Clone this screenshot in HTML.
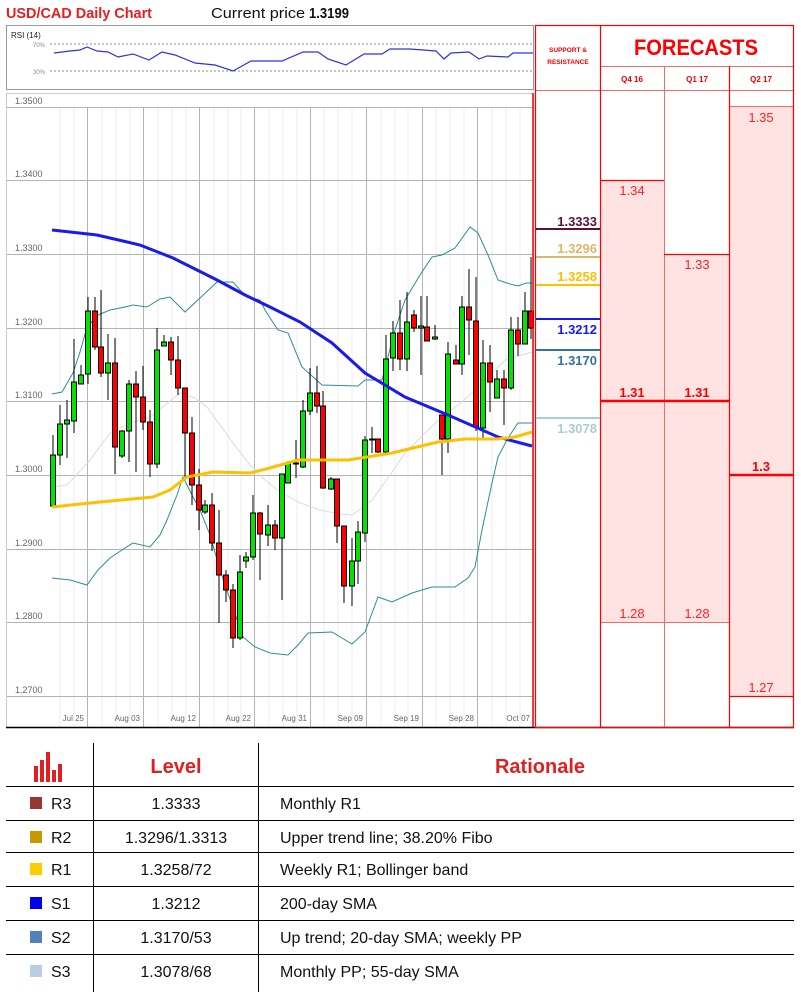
<!DOCTYPE html>
<html><head><meta charset="utf-8"><style>
html,body{margin:0;padding:0;background:#fff;width:801px;height:999px;overflow:hidden}
svg{display:block}
text{font-family:"Liberation Sans",sans-serif}
</style></head><body>
<svg width="801" height="999" viewBox="0 0 801 999" xmlns="http://www.w3.org/2000/svg">
<!-- title -->
<text x="6" y="18" font-size="15" font-weight="bold" fill="#e61e1e" textLength="146" lengthAdjust="spacingAndGlyphs">USD/CAD Daily Chart</text>
<text x="211" y="18" font-size="15" fill="#111" textLength="94" lengthAdjust="spacingAndGlyphs">Current price</text>
<text x="309" y="18" font-size="15" font-weight="bold" fill="#111" textLength="40" lengthAdjust="spacingAndGlyphs">1.3199</text>

<!-- RSI panel -->
<rect x="6.5" y="25.5" width="527" height="64" fill="#fff" stroke="#999"/>
<text x="11" y="38" font-size="8" fill="#222">RSI (14)</text>
<text x="33" y="47" font-size="6" fill="#888">70%</text>
<text x="33" y="74" font-size="6" fill="#888">30%</text>
<line x1="50" y1="44" x2="533" y2="44" stroke="#666" stroke-dasharray="2,2" stroke-width="0.8"/>
<line x1="50" y1="71" x2="533" y2="71" stroke="#666" stroke-dasharray="2,2" stroke-width="0.8"/>
<polyline fill="none" stroke="#3030e0" stroke-width="1.2" points="54,53 70,51 80,50 87,47 97,51 108,52 118,57 133,54 149,60 162,52 175,55 195,63 215,65 233,71 251,61 282,61 303,52 318,52 328,59 346,65 364,54 382,54 390,49 410,49 436,51 444,59 451,53 469,52 479,59 487,56 508,57 513,53 533,53"/>

<!-- main chart frame -->
<rect x="6.5" y="93.5" width="527" height="634" fill="#fff" stroke="#ccc"/>
<!-- minor verticals -->
<g stroke="#ececec" stroke-width="1">
<line x1="60" y1="107" x2="60" y2="727"/><line x1="74" y1="107" x2="74" y2="727"/><line x1="102" y1="107" x2="102" y2="727"/><line x1="116" y1="107" x2="116" y2="727"/><line x1="130" y1="107" x2="130" y2="727"/><line x1="158" y1="107" x2="158" y2="727"/><line x1="172" y1="107" x2="172" y2="727"/><line x1="186" y1="107" x2="186" y2="727"/><line x1="214" y1="107" x2="214" y2="727"/><line x1="228" y1="107" x2="228" y2="727"/><line x1="241" y1="107" x2="241" y2="727"/><line x1="269" y1="107" x2="269" y2="727"/><line x1="283" y1="107" x2="283" y2="727"/><line x1="297" y1="107" x2="297" y2="727"/><line x1="324" y1="107" x2="324" y2="727"/><line x1="338" y1="107" x2="338" y2="727"/><line x1="352" y1="107" x2="352" y2="727"/><line x1="381" y1="107" x2="381" y2="727"/><line x1="395" y1="107" x2="395" y2="727"/><line x1="408" y1="107" x2="408" y2="727"/><line x1="436" y1="107" x2="436" y2="727"/><line x1="450" y1="107" x2="450" y2="727"/><line x1="464" y1="107" x2="464" y2="727"/><line x1="492" y1="107" x2="492" y2="727"/><line x1="506" y1="107" x2="506" y2="727"/><line x1="520" y1="107" x2="520" y2="727"/>
</g>
<g stroke="#b4b4b4" stroke-width="1">
<line x1="87.5" y1="107" x2="87.5" y2="727"/><line x1="143.5" y1="107" x2="143.5" y2="727"/><line x1="199.5" y1="107" x2="199.5" y2="727"/><line x1="254.5" y1="107" x2="254.5" y2="727"/><line x1="310.5" y1="107" x2="310.5" y2="727"/><line x1="366.5" y1="107" x2="366.5" y2="727"/><line x1="422.5" y1="107" x2="422.5" y2="727"/><line x1="477.5" y1="107" x2="477.5" y2="727"/>
<line x1="7" y1="107.5" x2="533" y2="107.5"/><line x1="7" y1="180.5" x2="533" y2="180.5"/><line x1="7" y1="254.5" x2="533" y2="254.5"/><line x1="7" y1="328.5" x2="533" y2="328.5"/><line x1="7" y1="401.5" x2="533" y2="401.5"/><line x1="7" y1="475.5" x2="533" y2="475.5"/><line x1="7" y1="549.5" x2="533" y2="549.5"/><line x1="7" y1="622.5" x2="533" y2="622.5"/><line x1="7" y1="696.5" x2="533" y2="696.5"/>
</g>
<g font-size="9" fill="#666">
<text x="15" y="104">1.3500</text><text x="15" y="177">1.3400</text><text x="15" y="251">1.3300</text><text x="15" y="325">1.3200</text><text x="15" y="398">1.3100</text><text x="15" y="472">1.3000</text><text x="15" y="546">1.2900</text><text x="15" y="619">1.2800</text><text x="15" y="693">1.2700</text>
</g>
<g font-size="8" fill="#666" text-anchor="end">
<text x="84" y="721">Jul 25</text><text x="140" y="721">Aug 03</text><text x="196" y="721">Aug 12</text><text x="251" y="721">Aug 22</text><text x="307" y="721">Aug 31</text><text x="363" y="721">Sep 09</text><text x="419" y="721">Sep 19</text><text x="474" y="721">Sep 28</text><text x="530" y="721">Oct 07</text>
</g>

<!-- 20 SMA -->
<polyline fill="none" stroke="#dcdcdc" stroke-width="1" points="52,487 67,485 90,460 110,433 130,423 150,417 165,405 180,393 195,398 207,407 220,425 233,443 250,465 265,480 280,492 298,502 320,510 340,514 352,515 362,508 372,500 390,475 405,453 425,433 442,417 458,405 472,393 490,375 505,360 518,356 532,352"/>
<!-- Bollinger -->
<polyline fill="none" stroke="#2a9090" stroke-width="1" points="52,394 62,392 73,373 80,352 87,327 98,315 110,310 125,307 133,305 147,307 160,299 170,297 185,312 200,298 217,282 233,282 240,290 247,297 260,300 265,310 270,318 278,330 288,333 302,367 322,385 358,386 365,380 382,380 395,330 405,300 420,275 432,257 442,255 455,248 470,227 478,233 488,255 498,280 510,284 518,286 526,283 532,283"/>
<polyline fill="none" stroke="#2a9090" stroke-width="1" points="52,578 70,580 87,585 98,570 110,558 125,548 133,543 150,547 160,535 167,520 177,495 183,477 192,495 200,510 210,535 220,570 232,605 243,637 255,647 270,653 288,655 298,645 308,633 332,632 342,638 352,644 365,632 378,597 392,602 412,593 432,587 455,587 468,578 475,567 482,530 492,483 498,457 508,438 518,423 532,423"/>

<!-- candles -->
<g stroke="#000" stroke-width="1">
<line x1="53" y1="435" x2="53" y2="506"/><rect x="50.5" y="455" width="5" height="51" fill="#00e400"/>
<line x1="60" y1="405" x2="60" y2="465"/><rect x="57.5" y="424" width="5" height="31" fill="#00e400"/>
<line x1="67" y1="400" x2="67" y2="458"/><rect x="64.5" y="420" width="5" height="4" fill="#00e400"/>
<line x1="74" y1="339" x2="74" y2="433"/><rect x="71.5" y="382" width="5" height="39" fill="#00e400"/>
<line x1="81" y1="365" x2="81" y2="384"/><rect x="78.5" y="375" width="5" height="9" fill="#00e400"/>
<line x1="88" y1="297" x2="88" y2="384"/><rect x="85.5" y="311" width="5" height="63" fill="#00e400"/>
<line x1="95" y1="297" x2="95" y2="350"/><rect x="92.5" y="311" width="5" height="36" fill="#f00"/>
<line x1="101" y1="290" x2="101" y2="377"/><rect x="98.5" y="347" width="5" height="26" fill="#f00"/>
<line x1="108" y1="334" x2="108" y2="400"/><rect x="105.5" y="363" width="5" height="10" fill="#00e400"/>
<line x1="115" y1="338" x2="115" y2="474"/><rect x="112.5" y="363" width="5" height="84" fill="#f00"/>
<line x1="122" y1="430" x2="122" y2="458"/><rect x="119.5" y="431" width="5" height="25" fill="#00e400"/>
<line x1="129" y1="380" x2="129" y2="462"/><rect x="126.5" y="384" width="5" height="47" fill="#00e400"/>
<line x1="136" y1="371" x2="136" y2="472"/><rect x="133.5" y="384" width="5" height="13" fill="#f00"/>
<line x1="143" y1="366" x2="143" y2="430"/><rect x="140.5" y="397" width="5" height="25" fill="#f00"/>
<line x1="150" y1="410" x2="150" y2="477"/><rect x="147.5" y="422" width="5" height="42" fill="#f00"/>
<line x1="157" y1="328" x2="157" y2="468"/><rect x="154.5" y="350" width="5" height="114" fill="#00e400"/>
<line x1="164" y1="335" x2="164" y2="346"/><rect x="161.5" y="342" width="5" height="4" fill="#00e400"/>
<line x1="171" y1="337" x2="171" y2="375"/><rect x="168.5" y="342" width="5" height="18" fill="#f00"/>
<line x1="178" y1="336" x2="178" y2="395"/><rect x="175.5" y="360" width="5" height="28" fill="#f00"/>
<line x1="185" y1="388" x2="185" y2="480"/><rect x="182.5" y="388" width="5" height="45" fill="#f00"/>
<line x1="192" y1="417" x2="192" y2="505"/><rect x="189.5" y="433" width="5" height="52" fill="#f00"/>
<line x1="199" y1="469" x2="199" y2="530"/><rect x="196.5" y="485" width="5" height="25" fill="#f00"/>
<line x1="205" y1="500" x2="205" y2="514"/><rect x="202.5" y="505" width="5" height="7" fill="#00e400"/>
<line x1="212" y1="493" x2="212" y2="551"/><rect x="209.5" y="505" width="5" height="38" fill="#f00"/>
<line x1="219" y1="510" x2="219" y2="623"/><rect x="216.5" y="543" width="5" height="32" fill="#f00"/>
<line x1="226" y1="570" x2="226" y2="602"/><rect x="223.5" y="575" width="5" height="15" fill="#f00"/>
<line x1="233" y1="584" x2="233" y2="648"/><rect x="230.5" y="590" width="5" height="48" fill="#f00"/>
<line x1="240" y1="555" x2="240" y2="640"/><rect x="237.5" y="572" width="5" height="66" fill="#00e400"/>
<line x1="246" y1="552" x2="246" y2="568"/><rect x="243.5" y="557" width="5" height="4" fill="#00e400"/>
<line x1="253" y1="495" x2="253" y2="560"/><rect x="250.5" y="513" width="5" height="44" fill="#00e400"/>
<line x1="260" y1="512" x2="260" y2="580"/><rect x="257.5" y="513" width="5" height="21" fill="#f00"/>
<line x1="268" y1="505" x2="268" y2="546"/><rect x="265.5" y="525" width="5" height="10" fill="#00e400"/>
<line x1="275" y1="520" x2="275" y2="550"/><rect x="272.5" y="525" width="5" height="13" fill="#f00"/>
<line x1="282" y1="474" x2="282" y2="600"/><rect x="279.5" y="474" width="5" height="64" fill="#00e400"/>
<line x1="288" y1="461" x2="288" y2="482"/><rect x="285.5" y="463" width="5" height="20" fill="#00e400"/>
<line x1="296" y1="440" x2="296" y2="478"/><rect x="293.5" y="463" width="5" height="1" fill="#f00"/>
<line x1="303" y1="400" x2="303" y2="468"/><rect x="300.5" y="411" width="5" height="56" fill="#00e400"/>
<line x1="310" y1="368" x2="310" y2="415"/><rect x="307.5" y="393" width="5" height="18" fill="#00e400"/>
<line x1="317" y1="366" x2="317" y2="413"/><rect x="314.5" y="393" width="5" height="13" fill="#f00"/>
<line x1="323" y1="391" x2="323" y2="489"/><rect x="320.5" y="406" width="5" height="82" fill="#f00"/>
<line x1="331" y1="477" x2="331" y2="490"/><rect x="328.5" y="479" width="5" height="10" fill="#00e400"/>
<line x1="337" y1="479" x2="337" y2="543"/><rect x="334.5" y="479" width="5" height="47" fill="#f00"/>
<line x1="344" y1="526" x2="344" y2="603"/><rect x="341.5" y="526" width="5" height="60" fill="#f00"/>
<line x1="352" y1="538" x2="352" y2="606"/><rect x="349.5" y="561" width="5" height="25" fill="#00e400"/>
<line x1="358" y1="521" x2="358" y2="584"/><rect x="355.5" y="532" width="5" height="29" fill="#00e400"/>
<line x1="365" y1="436" x2="365" y2="542"/><rect x="362.5" y="440" width="5" height="93" fill="#00e400"/>
<line x1="372" y1="427" x2="372" y2="453"/><rect x="369.5" y="439" width="5" height="1" fill="#00e400"/>
<line x1="378" y1="439" x2="378" y2="453"/><rect x="375.5" y="439" width="5" height="13" fill="#f00"/>
<line x1="386" y1="335" x2="386" y2="454"/><rect x="383.5" y="359" width="5" height="93" fill="#00e400"/>
<line x1="393" y1="321" x2="393" y2="371"/><rect x="390.5" y="333" width="5" height="25" fill="#00e400"/>
<line x1="400" y1="300" x2="400" y2="370"/><rect x="397.5" y="333" width="5" height="26" fill="#f00"/>
<line x1="407" y1="292" x2="407" y2="371"/><rect x="404.5" y="322" width="5" height="37" fill="#00e400"/>
<line x1="414" y1="310" x2="414" y2="332"/><rect x="411.5" y="315" width="5" height="13" fill="#f00"/>
<line x1="421" y1="296" x2="421" y2="375"/><rect x="418.5" y="326" width="5" height="2" fill="#00e400"/>
<line x1="427" y1="296" x2="427" y2="341"/><rect x="424.5" y="327" width="5" height="14" fill="#f00"/>
<line x1="435" y1="325" x2="435" y2="340"/><rect x="432.5" y="337" width="5" height="2" fill="#00e400"/>
<line x1="442" y1="415" x2="442" y2="475"/><rect x="439.5" y="415" width="5" height="24" fill="#f00"/>
<line x1="448" y1="342" x2="448" y2="453"/><rect x="445.5" y="354" width="5" height="85" fill="#00e400"/>
<line x1="456" y1="345" x2="456" y2="364"/><rect x="453.5" y="360" width="5" height="4" fill="#f00"/>
<line x1="462" y1="296" x2="462" y2="375"/><rect x="459.5" y="307" width="5" height="57" fill="#00e400"/>
<line x1="469" y1="269" x2="469" y2="355"/><rect x="466.5" y="307" width="5" height="13" fill="#f00"/>
<line x1="476" y1="277" x2="476" y2="431"/><rect x="473.5" y="321" width="5" height="106" fill="#f00"/>
<line x1="483" y1="340" x2="483" y2="439"/><rect x="480.5" y="363" width="5" height="65" fill="#00e400"/>
<line x1="490" y1="345" x2="490" y2="412"/><rect x="487.5" y="363" width="5" height="19" fill="#f00"/>
<line x1="497" y1="370" x2="497" y2="398"/><rect x="494.5" y="379" width="5" height="19" fill="#00e400"/>
<line x1="504" y1="370" x2="504" y2="425"/><rect x="501.5" y="379" width="5" height="9" fill="#f00"/>
<line x1="511" y1="317" x2="511" y2="390"/><rect x="508.5" y="330" width="5" height="58" fill="#00e400"/>
<line x1="518" y1="317" x2="518" y2="356"/><rect x="515.5" y="330" width="5" height="14" fill="#f00"/>
<line x1="525" y1="292" x2="525" y2="344"/><rect x="522.5" y="311" width="5" height="33" fill="#00e400"/>
<line x1="531" y1="257" x2="531" y2="339"/><rect x="528.5" y="311" width="5" height="17" fill="#f00"/>
</g>

<!-- 200 SMA & 55 SMA -->
<polyline fill="none" stroke="#1a1aee" stroke-width="3" points="52,230 97,235 140,245 173,258 217,280 245,295 270,307 300,322 332,343 365,373 405,397 448,415 498,437 532,446"/>
<polyline fill="none" stroke="#ffc000" stroke-width="3" points="52,507 100,502 153,497 170,490 187,477 213,472 250,473 270,468 298,460 348,460 392,453 438,442 465,439 498,439 515,437 532,432"/>

<line x1="533" y1="93" x2="533" y2="728" stroke="#f00" stroke-width="1.5"/>
<line x1="6" y1="727.5" x2="794" y2="727.5" stroke="#000" stroke-width="1.5"/>

<!-- right panel -->
<rect x="600" y="180" width="64" height="442" fill="#ffe3e3"/>
<rect x="664" y="254" width="65" height="368" fill="#ffe3e3"/>
<rect x="729" y="106" width="64" height="590" fill="#ffe3e3"/>
<g stroke="#ff6666" stroke-width="1">
<line x1="536" y1="90.5" x2="793" y2="90.5"/>
<line x1="664.5" y1="66" x2="664.5" y2="727"/>
<line x1="600" y1="66.5" x2="793" y2="66.5"/>
<line x1="729" y1="106.5" x2="793" y2="106.5"/>
<line x1="600" y1="622.5" x2="729" y2="622.5"/>
</g>
<g stroke="#f00" stroke-width="1.2">
<rect x="535.5" y="25.5" width="258" height="702" fill="none"/>
<line x1="600.5" y1="25" x2="600.5" y2="727"/>
<line x1="729.5" y1="66" x2="729.5" y2="727"/>
<line x1="600" y1="180.5" x2="664" y2="180.5"/>
<line x1="664" y1="254.5" x2="729" y2="254.5"/>
<line x1="729" y1="696.5" x2="793" y2="696.5"/>
</g>
<line x1="600" y1="401" x2="729" y2="401" stroke="#f00" stroke-width="2.5"/>
<line x1="729" y1="475" x2="793" y2="475" stroke="#f00" stroke-width="2.5"/>

<text x="568" y="52" font-size="6.5" font-weight="bold" fill="#e00" text-anchor="middle">SUPPORT &amp;</text>
<text x="568" y="64" font-size="6.5" font-weight="bold" fill="#e00" text-anchor="middle">RESISTANCE</text>
<text x="696" y="55" font-size="22" font-weight="bold" fill="#f00" text-anchor="middle" textLength="124" lengthAdjust="spacingAndGlyphs">FORECASTS</text>
<g font-size="8" font-weight="bold" fill="#e00" text-anchor="middle">
<text x="632" y="82">Q4 16</text><text x="697" y="82">Q1 17</text><text x="761" y="82">Q2 17</text>
</g>
<g font-size="13" fill="#f22" text-anchor="middle">
<text x="632" y="195">1.34</text><text x="697" y="269">1.33</text><text x="761" y="122">1.35</text>
<text x="632" y="618">1.28</text><text x="697" y="618">1.28</text><text x="761" y="692">1.27</text>
</g>
<g font-size="13" font-weight="bold" fill="#f00" text-anchor="middle">
<text x="632" y="397">1.31</text><text x="697" y="397">1.31</text><text x="761" y="471">1.3</text>
</g>

<!-- S&R levels -->
<line x1="536" y1="229" x2="600" y2="229" stroke="#5c1236" stroke-width="2"/>
<line x1="536" y1="257" x2="600" y2="257" stroke="#d9b86a" stroke-width="2"/>
<line x1="536" y1="285" x2="600" y2="285" stroke="#ffc000" stroke-width="2"/>
<line x1="536" y1="319" x2="600" y2="319" stroke="#1a1aee" stroke-width="2"/>
<line x1="536" y1="350" x2="600" y2="350" stroke="#31739c" stroke-width="2"/>
<line x1="536" y1="418" x2="600" y2="418" stroke="#a8cfcf" stroke-width="2"/>
<g font-size="13" font-weight="bold" text-anchor="end">
<text x="597" y="226" fill="#5c1236">1.3333</text>
<text x="597" y="253" fill="#d9b86a">1.3296</text>
<text x="597" y="281" fill="#ffc000">1.3258</text>
<text x="597" y="334" fill="#1a1aee">1.3212</text>
<text x="597" y="365" fill="#31739c">1.3170</text>
<text x="597" y="433" fill="#a8cfcf">1.3078</text>
</g>

<!-- bottom table -->
<g stroke="#000" stroke-width="1">
<line x1="93.5" y1="743" x2="93.5" y2="992"/>
<line x1="258.5" y1="743" x2="258.5" y2="992"/>
<line x1="6" y1="786.5" x2="794" y2="786.5"/>
<line x1="6" y1="820.5" x2="794" y2="820.5"/>
<line x1="6" y1="852.5" x2="794" y2="852.5"/>
<line x1="6" y1="886.5" x2="794" y2="886.5"/>
<line x1="6" y1="920.5" x2="794" y2="920.5"/>
<line x1="6" y1="954.5" x2="794" y2="954.5"/>
</g>
<g fill="#e02020">
<rect x="34" y="766" width="4" height="16"/><rect x="40" y="760" width="4" height="22"/><rect x="46" y="752" width="4" height="30"/><rect x="52" y="770" width="4" height="12"/><rect x="58" y="764" width="4" height="18"/>
</g>
<text x="176" y="773" font-size="20" font-weight="bold" fill="#e02020" text-anchor="middle">Level</text>
<text x="540" y="773" font-size="20" font-weight="bold" fill="#e02020" text-anchor="middle">Rationale</text>
<rect x="30" y="797" width="12" height="12" fill="#953735"/>
<rect x="30" y="831" width="12" height="12" fill="#c89800"/>
<rect x="30" y="863" width="12" height="12" fill="#ffcc00"/>
<rect x="30" y="897" width="12" height="12" fill="#0000ee"/>
<rect x="30" y="931" width="12" height="12" fill="#4f81bd"/>
<rect x="30" y="965" width="12" height="12" fill="#b9cde5"/>
<g font-size="16" fill="#111">
<text x="51" y="809">R3</text><text x="51" y="843">R2</text><text x="51" y="875">R1</text><text x="51" y="909">S1</text><text x="51" y="943">S2</text><text x="51" y="977">S3</text>
<g text-anchor="middle">
<text x="176" y="809">1.3333</text><text x="176" y="843">1.3296/1.3313</text><text x="176" y="875">1.3258/72</text><text x="176" y="909">1.3212</text><text x="176" y="943">1.3170/53</text><text x="176" y="977">1.3078/68</text>
</g>
<text x="280" y="809">Monthly R1</text><text x="280" y="843">Upper trend line; 38.20% Fibo</text><text x="280" y="875">Weekly R1; Bollinger band</text><text x="280" y="909">200-day SMA</text><text x="280" y="943">Up trend; 20-day SMA; weekly PP</text><text x="280" y="977">Monthly PP; 55-day SMA</text>
</g>
</svg>
</body></html>
